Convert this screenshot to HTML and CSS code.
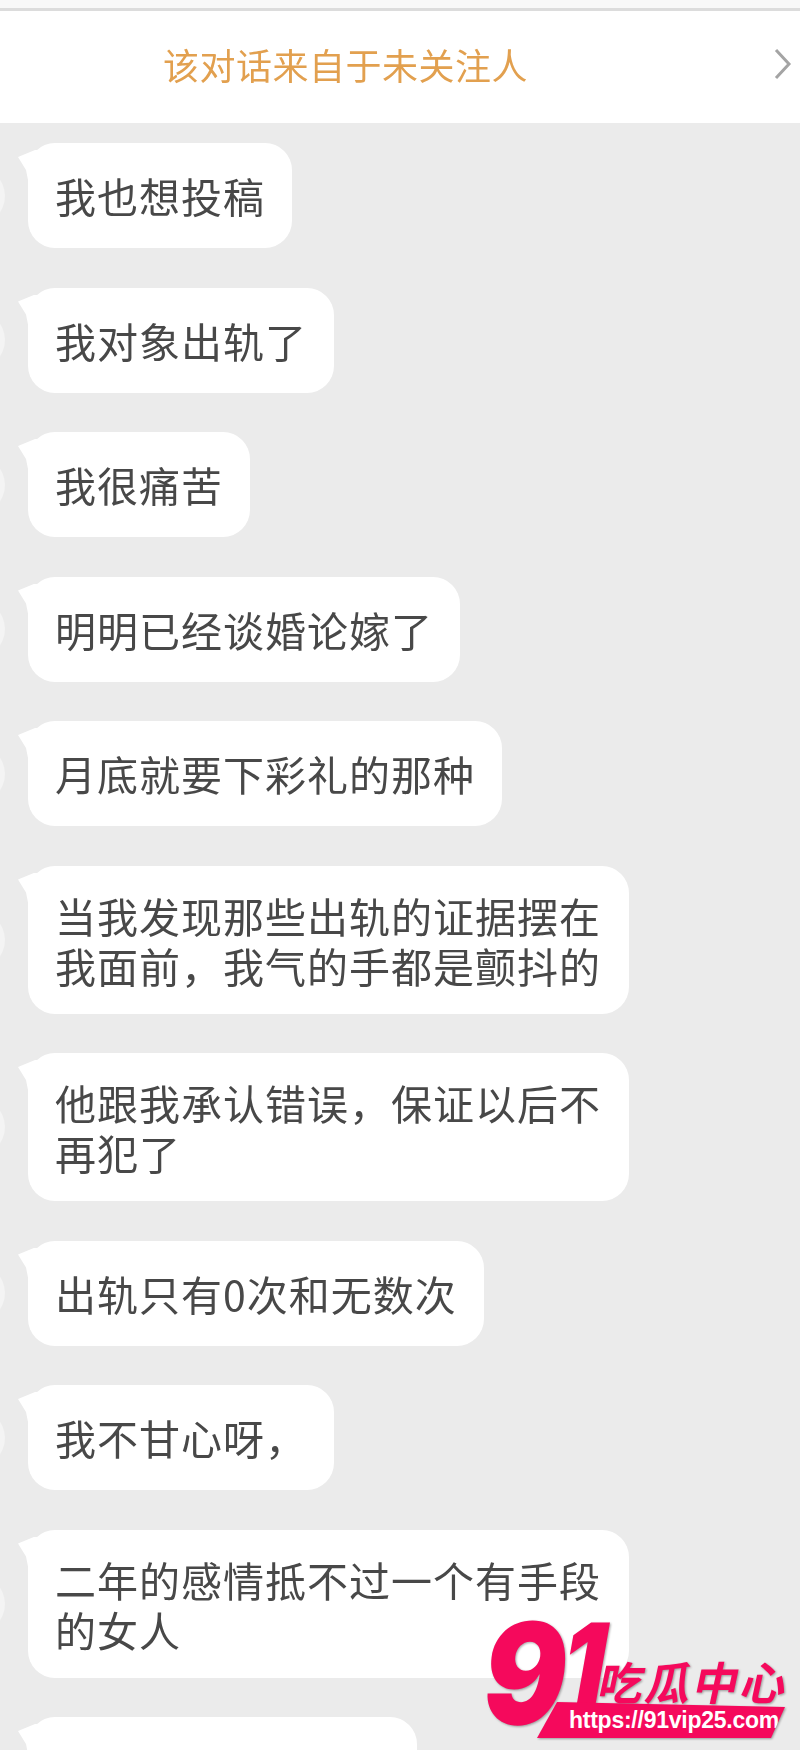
FILE: index.html
```html
<!DOCTYPE html>
<html lang="zh">
<head>
<meta charset="utf-8">
<title>该对话来自于未关注人</title>
<link rel="stylesheet" href="styles.css">
</head>
<body>
<div class="page">
  <div class="topstrip"></div>
  <header class="notice">
    <span class="notice-text">该对话来自于未关注人</span>
    <svg class="chevron" viewBox="0 0 18 32" aria-hidden="true"><path d="M2 2 L15 16 L2 30"/></svg>
  </header>
  <main class="messages">
    <div class="msg"><div class="bubble">我也想投稿</div></div>
    <div class="msg"><div class="bubble">我对象出轨了</div></div>
    <div class="msg"><div class="bubble">我很痛苦</div></div>
    <div class="msg"><div class="bubble">明明已经谈婚论嫁了</div></div>
    <div class="msg"><div class="bubble">月底就要下彩礼的那种</div></div>
    <div class="msg"><div class="bubble multi">当我发现那些出轨的证据摆在我面前，我气的手都是颤抖的</div></div>
    <div class="msg"><div class="bubble multi">他跟我承认错误，保证以后不再犯了</div></div>
    <div class="msg"><div class="bubble">出轨只有0次和无数次</div></div>
    <div class="msg"><div class="bubble">我不甘心呀，</div></div>
    <div class="msg"><div class="bubble multi">二年的感情抵不过一个有手段的女人</div></div>
    <div class="msg"><div class="bubble last"></div></div>
  </main>
  <div class="logo">
    <span class="logo-nine">9</span>
    <span class="logo-one">1</span>
    <span class="logo-name">吃瓜中心</span>
    <div class="logo-band"><span class="logo-url">https://91vip25.com</span></div>
  </div>
</div>
</body>
</html>
```

FILE: styles.css
```css
* { box-sizing: border-box; }
html, body { margin: 0; padding: 0; }
body {
  width: 800px;
  height: 1750px;
  overflow: hidden;
  background: #ebebeb;
  font-family: "Noto Sans CJK SC", "Noto Sans", sans-serif;
}
.page { position: relative; width: 800px; height: 1750px; overflow: hidden; }
.topstrip {
  height: 11px;
  background: #f8f8f8;
  border-bottom: 3px solid #dcdcdc;
}
.notice {
  position: relative;
  height: 112px;
  background: #fff;
  display: flex;
  align-items: center;
  justify-content: center;
  padding-right: 109px;
  padding-bottom: 7px;
}
.notice-text {
  font-size: 36px;
  letter-spacing: 0.5px;
  line-height: 50px;
  color: #e2a04f;
  filter: blur(0.5px);
}
.chevron {
  position: absolute;
  right: 8px;
  top: 37px;
  width: 18px;
  height: 32px;
  filter: blur(0.6px);
}
.chevron path { fill: none; stroke: #a4a4a4; stroke-width: 3; }
.messages {
  display: flex;
  flex-direction: column;
  align-items: flex-start;
  gap: 39.5px;
  padding: 20px 0 0 28px;
}
.msg { position: relative; }
.msg::before {
  content: "";
  position: absolute;
  left: -81px;
  top: 50%;
  width: 58px;
  height: 58px;
  margin-top: -29px;
  border-radius: 50%;
  background: #f4f4f4;
}
.bubble {
  position: relative;
  width: fit-content;
  max-width: 601px;
  min-height: 105px;
  padding: 27px 27px;
  border-radius: 27px;
  background: #fff;
  color: #484848;
  font-size: 41px;
  letter-spacing: 1px;
  line-height: 50px;
  filter: blur(0.35px);
}
.bubble::before {
  content: "";
  position: absolute;
  left: -10px;
  top: 7px;
  width: 24px;
  height: 30px;
  background: #fff;
  clip-path: polygon(0 7px, 17px 0, 100% 0, 100% 100%, 10px 100%, 8px 20px);
}
.multi { min-height: 148px; padding-top: 24px; padding-bottom: 24px; }
.last { width: 389px; }
.logo {
  position: absolute;
  left: 480px;
  top: 1615px;
  width: 320px;
  height: 135px;
  color: #f5095c;
  filter: drop-shadow(1px 1px 1px rgba(0, 0, 0, 0.35));
}
.logo-nine,
.logo-one {
  position: absolute;
  font-family: "Inter", "Liberation Sans", sans-serif;
  font-weight: 900;
  transform-origin: 0 100%;
  white-space: nowrap;
}
.logo-nine {
  left: -6px;
  top: -22px;
  font-size: 140px;
  line-height: 160px;
  transform: skewX(-8deg) scaleX(0.88);
}
.logo-one {
  left: 72px;
  top: -17px;
  font-size: 116px;
  line-height: 134px;
  transform: skewX(-10deg) scaleX(0.82);
}
.logo-name {
  position: absolute;
  left: 120px;
  top: 38px;
  font-weight: 700;
  font-size: 45px;
  line-height: 56px;
  letter-spacing: 2.5px;
  white-space: nowrap;
  transform: skewX(-12deg);
}
.logo-band {
  position: absolute;
  left: 57px;
  top: 87px;
  width: 248px;
  height: 36px;
  background: #f5095c;
  clip-path: polygon(20px 0, 100% 5px, 234px 100%, 0 100%);
  display: flex;
  align-items: center;
  justify-content: center;
  padding-left: 26px;
}
.logo-url {
  font-family: "Liberation Sans", sans-serif;
  font-weight: 700;
  font-size: 23px;
  letter-spacing: -0.25px;
  line-height: 30px;
  color: #fff;
}
```
